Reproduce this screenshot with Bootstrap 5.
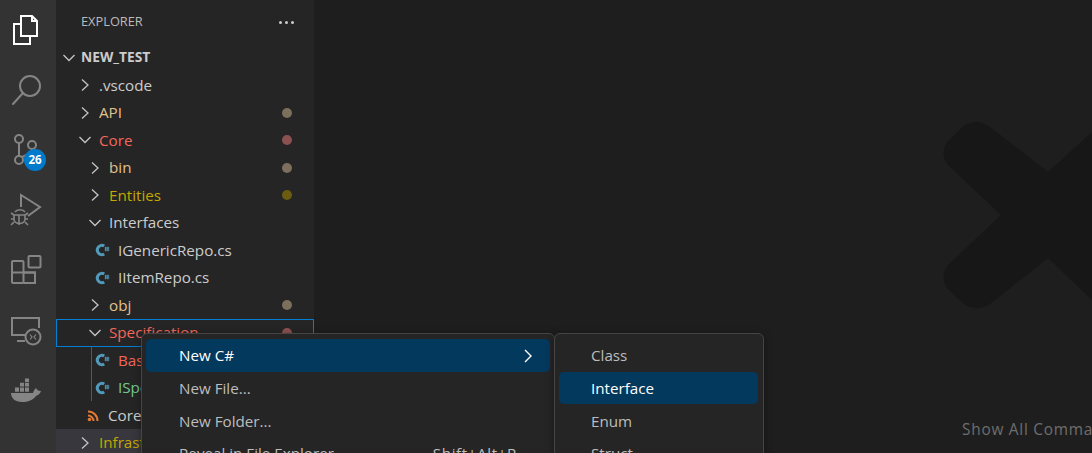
<!DOCTYPE html>
<html lang="en">
<head>
<meta charset="utf-8">
<title>Explorer</title>
<link href="https://cdn.jsdelivr.net/npm/bootstrap@5.3.0/dist/css/bootstrap.min.css" rel="stylesheet">
<style>
html,body{height:453px;overflow:hidden;background:#1e1e1e;}
body{font-family:"Open Sans","Noto Sans",sans-serif;font-size:15.2px;color:#ccc;}
.shell{height:453px;width:1092px;overflow:hidden;}
.actbar{width:56px;background:#333;flex:none;}
.actcell{height:60px;position:relative;}
.actcell svg{display:block;}
.ico{fill:none;stroke:#858585;stroke-width:2;}
.gitbadge{position:absolute;left:24px;top:29px;min-width:22px;height:22px;border-radius:11px;background:#007acc;color:#fff;font-size:11.5px;font-weight:700;line-height:22px;text-align:center;}
.sidebar{width:258px;background:#252526;flex:none;position:relative;}
.sidehead{height:44px;padding-left:25px;padding-right:20px;font-size:12.8px;color:#bbb;flex:none;}
.dots{display:flex;gap:3px;}
.dots i{display:block;width:3px;height:3px;border-radius:50%;background:#ccc;}
.trow{height:27.5px;white-space:nowrap;display:flex;align-items:center;position:relative;padding-right:22px;flex:none;}
.trow .lbl{flex:1 1 auto;overflow:hidden;}
.chev{flex:none;fill:none;stroke:#c5c5c5;stroke-width:1.3;display:block;}
.d0{padding-left:6px;}
.d0 .chev{margin-right:5px;}
.d1{padding-left:22px;}
.d1 .chev,.d2 .chev{margin-right:7px;}
.d2{padding-left:32px;}
.f2{padding-left:31px;}
.f3{padding-left:39px;}
.ficon{flex:none;margin-right:8px;display:block;}
.dotmark{flex:none;width:10px;height:10px;border-radius:50%;display:block;}
.rootname{font-weight:700;font-size:13.8px;color:#ccc;}
.c-mod{color:#e2c08d;}
.c-del{color:#f4675a;}
.c-yel{color:#c4a800;}
.c-new{color:#73c991;}
.dm-mod{background:#7c6f5c;}
.dm-del{background:#8b5150;}
.dm-yel{background:#6b5c12;}
.focused{outline:1px solid #007fd4;outline-offset:-1px;}
.selrow{background:#37373d;}
.guide{position:absolute;left:35px;top:346px;width:1px;height:55px;background:#585858;}
.editor{flex:1 1 auto;background:#1e1e1e;overflow:hidden;min-width:0;}
.editor svg{display:block;}
.hintline{white-space:nowrap;padding-left:648px;padding-top:100px;color:#6e6e6e;font-size:15.4px;letter-spacing:.75px;line-height:20px;}
.ctxmenu{position:absolute;background:#252526;border:1px solid #454545;border-radius:6px;padding:5px 4px;box-shadow:0 2px 8px rgba(0,0,0,.36);white-space:nowrap;}
.m1{left:141px;top:333px;width:414px;height:140px;}
.m2{left:554px;top:333px;width:210px;height:140px;}
.mitem{height:32.6px;display:flex;align-items:center;border-radius:5px;color:#bdbdbd;padding-top:1px;}
.m1 .mitem{padding-left:33px;padding-right:33px;}
.m2 .mitem{padding-left:32px;margin-right:1px;}
.mitem.on{background:#04395e;color:#fff;}
.shortcut{margin-left:auto;letter-spacing:.6px;}
.subarrow{margin-left:auto;margin-right:-16px;display:block;fill:none;stroke:#fff;stroke-width:1.4;}
</style>
</head>
<body>
<svg width="0" height="0" class="position-absolute">
<defs>
<symbol id="right" viewBox="0 0 14 14"><path d="M4 1.500L10 7L4 12.500"/></symbol>
<symbol id="down" viewBox="0 0 14 14"><path d="M1.500 4L7 9.500L12.500 4"/></symbol>
<symbol id="cs" viewBox="0 0 16 16">
<path d="M9.800 3.800A4.700 5 0 1 0 9.800 12.200" fill="none" stroke="#519aba" stroke-width="3.200"/>
<path d="M11.400 4.400V9.400M13.800 4.400V9.400M10.400 5.800H15.200M10.400 8H15.200" fill="none" stroke="#519aba" stroke-width="1.100"/>
</symbol>
</defs>
</svg>
<div class="shell d-flex position-relative">
  <div class="actbar d-flex flex-column">
    <div class="actcell"><svg width="56" height="60" viewBox="0 0 56 60" fill="none" stroke="#fff" stroke-width="2">
      <path d="M20 24H14V44H30V37"/><path d="M21 16H32L37 21V36H21Z"/><path d="M32 16V21H37"/></svg></div>
    <div class="actcell"><svg width="56" height="60" viewBox="0 60 56 60" class="ico">
      <circle cx="30" cy="86" r="10"/><path d="M23 93L13 104" stroke-linecap="round"/></svg></div>
    <div class="actcell"><svg width="56" height="60" viewBox="0 120 56 60" class="ico">
      <circle cx="19" cy="139" r="4"/><circle cx="32" cy="145" r="4"/><circle cx="19" cy="160" r="4"/><path d="M19 143V156M32 149C32 154 26 155 22 157"/></svg>
      <span class="gitbadge">26</span></div>
    <div class="actcell"><svg width="56" height="60" viewBox="0 180 56 60" class="ico">
      <path d="M21 207V195L40 207L28 216"/><path d="M15 212C17 209 23 209 25 212M14 215H25V219C25 225 14 225 14 219ZM19 215V225M11 213L14 215M28 213L25 215M11 219H14M28 219H25M11 225L14 222M28 225L25 222" stroke-width="1.600"/></svg></div>
    <div class="actcell"><svg width="56" height="60" viewBox="0 240 56 60" class="ico">
      <rect x="12" y="261" width="11.500" height="22" rx="1"/><path d="M12 272.500H35V283H23.500"/><path d="M35 283V272.500H23.500"/><rect x="28.500" y="256" width="12" height="11.500" rx="1"/></svg></div>
    <div class="actcell"><svg width="56" height="60" viewBox="0 300 56 60" class="ico">
      <path d="M26 335H12V318H39V328"/><path d="M17 341H25"/><circle cx="33" cy="337" r="7.500"/><path d="M30 334.500L32 337L30 339.500M36 334.500L34 337L36 339.500" stroke-width="1.200"/></svg></div>
    <div class="actcell"><svg width="56" height="60" viewBox="0 360 56 60">
      <path fill="#858585" d="M11 393H33C34 390 35 389 36 388C37 390 38 391 41 391C40 394 38 395 36 396C33 400 28 402 22 402C15 402 11 398 11 393Z"/>
      <path fill="#858585" d="M15 387.500H19V391.800H15ZM20 387.500H24V391.800H20ZM25 387.500H29V391.800H25ZM20 382.800H24V386.600H20ZM25 382.800H29V386.600H25ZM25 378.500H29V381.900H25Z"/></svg></div>
  </div>

  <div class="sidebar d-flex flex-column overflow-hidden">
    <div class="sidehead d-flex align-items-center justify-content-between"><span>EXPLORER</span><span class="dots"><i></i><i></i><i></i></span></div>
    <div class="trow d0"><svg class="chev" width="14" height="14"><use href="#down"/></svg><span class="lbl rootname">NEW_TEST</span></div>
    <div class="trow d1"><svg class="chev" width="14" height="14"><use href="#right"/></svg><span class="lbl">.vscode</span></div>
    <div class="trow d1"><svg class="chev" width="14" height="14"><use href="#right"/></svg><span class="lbl c-mod">API</span><span class="dotmark dm-mod"></span></div>
    <div class="trow d1"><svg class="chev" width="14" height="14"><use href="#down"/></svg><span class="lbl c-del">Core</span><span class="dotmark dm-del"></span></div>
    <div class="trow d2"><svg class="chev" width="14" height="14"><use href="#right"/></svg><span class="lbl c-mod">bin</span><span class="dotmark dm-mod"></span></div>
    <div class="trow d2"><svg class="chev" width="14" height="14"><use href="#right"/></svg><span class="lbl c-yel">Entities</span><span class="dotmark dm-yel"></span></div>
    <div class="trow d2"><svg class="chev" width="14" height="14"><use href="#down"/></svg><span class="lbl">Interfaces</span></div>
    <div class="trow f3"><svg class="ficon" width="15" height="16"><use href="#cs"/></svg><span class="lbl">IGenericRepo.cs</span></div>
    <div class="trow f3"><svg class="ficon" width="15" height="16"><use href="#cs"/></svg><span class="lbl">IItemRepo.cs</span></div>
    <div class="trow d2"><svg class="chev" width="14" height="14"><use href="#right"/></svg><span class="lbl c-mod">obj</span><span class="dotmark dm-mod"></span></div>
    <div class="trow d2 focused"><svg class="chev" width="14" height="14"><use href="#down"/></svg><span class="lbl c-del">Specification</span><span class="dotmark dm-del"></span></div>
    <div class="trow f3"><svg class="ficon" width="15" height="16"><use href="#cs"/></svg><span class="lbl c-del">BaseSpecification.cs</span></div>
    <div class="trow f3"><svg class="ficon" width="15" height="16"><use href="#cs"/></svg><span class="lbl c-new">ISpecification.cs</span></div>
    <div class="trow f2"><svg class="ficon" width="13" height="13" viewBox="0 0 13 13"><g fill="none" stroke="#e37933" stroke-width="2"><path d="M1 2.500C6.500 2.500 10.500 6.500 10.500 12"/><path d="M1 6.500C4 6.500 6.500 9 6.500 12"/></g><circle cx="2.500" cy="10.500" r="1.800" fill="#e37933"/></svg><span class="lbl">Core.csproj</span></div>
    <div class="trow d1 selrow"><svg class="chev" width="14" height="14"><use href="#right"/></svg><span class="lbl c-yel">Infrastructure</span></div>
    <div class="guide"></div>
  </div>

  <div class="editor d-flex flex-column">
    <svg width="778" height="320" viewBox="314 0 778 320"><path fill="#171717" d="M1001 215L947 164Q940 153 947 142L965 125Q977 118 990 127L1048 172L1092 132V300L1048 258L990 304Q977 312 965 305L947 288Q940 277 947 266Z"/></svg>
    <div class="hintline">Show All Commands</div>
  </div>

  <div class="ctxmenu m1">
    <div class="mitem on"><span>New C#</span><svg class="subarrow" width="10" height="16"><path d="M2 2L8 8L2 14"/></svg></div>
    <div class="mitem"><span>New File...</span></div>
    <div class="mitem"><span>New Folder...</span></div>
    <div class="mitem"><span>Reveal in File Explorer</span><span class="shortcut">Shift+Alt+R</span></div>
  </div>
  <div class="ctxmenu m2">
    <div class="mitem"><span>Class</span></div>
    <div class="mitem on"><span>Interface</span></div>
    <div class="mitem"><span>Enum</span></div>
    <div class="mitem"><span>Struct</span></div>
  </div>
</div>
<script src="https://cdn.jsdelivr.net/npm/bootstrap@5.3.0/dist/js/bootstrap.bundle.min.js"></script>
</body>
</html>
